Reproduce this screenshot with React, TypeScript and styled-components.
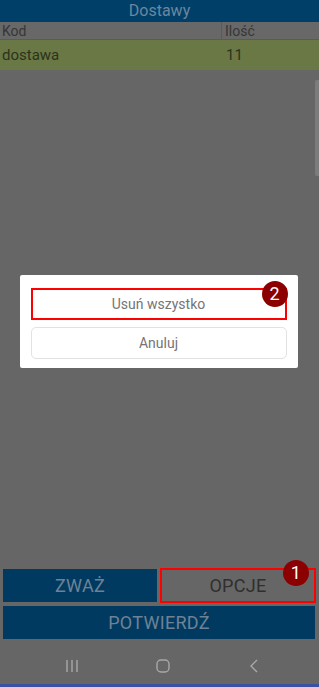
import React from 'react';
import styled, { createGlobalStyle } from 'styled-components';

const GlobalStyle = createGlobalStyle`
  html, body {
    margin: 0;
    padding: 0;
    background: #666666;
  }
  * {
    box-sizing: border-box;
  }
  body {
    font-family: Roboto, "Noto Sans", "Liberation Sans", sans-serif;
  }
`;

const Screen = styled.div`
  position: relative;
  width: 319px;
  height: 687px;
  display: flex;
  flex-direction: column;
  background: #666666;
  overflow: hidden;
`;

const Header = styled.div`
  height: 22px;
  background: #003f68;
  color: #6a879f;
  font-size: 16px;
  line-height: 22px;
  text-align: center;
`;

const Row = styled.div<{ $kind: 'head' | 'data' }>`
  display: grid;
  grid-template-columns: 222px 94px 3px;
  height: ${(p) => (p.$kind === 'head' ? '18px' : '30px')};
  background: ${(p) => (p.$kind === 'head' ? '#686868' : '#697844')};
  border-bottom: 1px solid ${(p) => (p.$kind === 'head' ? '#5a5a5a' : '#697844')};
  color: ${(p) => (p.$kind === 'head' ? '#363636' : '#2c331c')};
  font-size: ${(p) => (p.$kind === 'head' ? '14px' : '15px')};
`;

const Cell = styled.div<{ $divider?: boolean; $pad: number }>`
  display: flex;
  align-items: center;
  padding-left: ${(p) => p.$pad}px;
  border-right: ${(p) => (p.$divider ? '1px solid #5a5a5a' : 'none')};
  white-space: nowrap;
`;

const Body = styled.div`
  position: relative;
  flex: 1;
`;

const ScrollThumb = styled.div`
  position: absolute;
  top: 10px;
  right: 0;
  width: 4px;
  height: 96px;
  border-radius: 2px 0 0 2px;
  background: #7c7c7c;
`;

const Actions = styled.div`
  display: flex;
  flex-direction: column;
  gap: 4px;
  padding: 0 4px 0 3px;
`;

const ActionRow = styled.div`
  display: grid;
  grid-template-columns: 1fr 1fr;
  gap: 4px;
`;

const ActionButton = styled.div<{ $flat?: boolean; $marked?: boolean }>`
  position: relative;
  height: 33px;
  display: flex;
  align-items: center;
  justify-content: center;
  background: ${(p) => (p.$flat ? '#666666' : '#013a60')};
  color: ${(p) => (p.$flat ? '#2f2f2f' : '#6d8296')};
  font-size: 18px;
  letter-spacing: 0.3px;
  outline: ${(p) => (p.$marked ? '2px solid #ff0000' : 'none')};
  outline-offset: -1px;
`;

const Badge = styled.div<{ $top: number; $right: number }>`
  position: absolute;
  top: ${(p) => p.$top}px;
  right: ${(p) => p.$right}px;
  width: 26px;
  height: 26px;
  border-radius: 50%;
  background: #8b0000;
  color: #ffffff;
  font-size: 18px;
  line-height: 26px;
  text-align: center;
  z-index: 3;
`;

const NavBar = styled.div`
  height: 44px;
  margin-top: 4px;
  display: grid;
  grid-template-columns: 1fr 1fr 1fr;
  align-items: center;
  justify-items: center;
  padding: 5px 20px 0 26px;
  border-bottom: 3px solid #3b4fa3;
`;

const Backdrop = styled.div`
  position: absolute;
  inset: 0;
  display: flex;
  align-items: flex-start;
  justify-content: center;
  padding-top: 275px;
  z-index: 2;
`;

const Dialog = styled.div`
  width: 278px;
  margin-left: -2px;
  background: #ffffff;
  border-radius: 2px;
  padding: 13px 11px 9px 11px;
  display: flex;
  flex-direction: column;
  gap: 7px;
`;

const DialogButton = styled.div<{ $marked?: boolean }>`
  position: relative;
  height: 32px;
  display: flex;
  align-items: center;
  justify-content: center;
  border: ${(p) => (p.$marked ? '2px solid #ff0000' : '1px solid #e2e2e2')};
  border-radius: ${(p) => (p.$marked ? '0' : '5px')};
  color: #757575;
  font-size: 14px;
`;

const NavIcon = styled.svg`
  display: block;
`;

export default function App() {
  return (
    <>
      <GlobalStyle />
      <Screen>
        <Header>Dostawy</Header>
        <Row $kind="head">
          <Cell $divider $pad={2}>Kod</Cell>
          <Cell $pad={3}>Ilość</Cell>
          <Cell $pad={0} />
        </Row>
        <Row $kind="data">
          <Cell $pad={2}>dostawa</Cell>
          <Cell $pad={4}>11</Cell>
          <Cell $pad={0} />
        </Row>
        <Body>
          <ScrollThumb />
        </Body>
        <Actions>
          <ActionRow>
            <ActionButton>ZWAŻ</ActionButton>
            <ActionButton $flat $marked>
              OPCJE
              <Badge $top={-9} $right={6}>1</Badge>
            </ActionButton>
          </ActionRow>
          <ActionButton>POTWIERDŹ</ActionButton>
        </Actions>
        <NavBar>
          <NavIcon width="14" height="14" viewBox="0 0 14 14">
            <path d="M2 1v12M7 1v12M12 1v12" stroke="#a8a8a8" strokeWidth="1.4" fill="none" />
          </NavIcon>
          <NavIcon width="14" height="14" viewBox="0 0 14 14">
            <rect x="1" y="1" width="12" height="12" rx="4" stroke="#a8a8a8" strokeWidth="1.4" fill="none" />
          </NavIcon>
          <NavIcon width="10" height="14" viewBox="0 0 10 14">
            <path d="M8 1L2 7l6 6" stroke="#a8a8a8" strokeWidth="1.4" fill="none" />
          </NavIcon>
        </NavBar>
        <Backdrop>
          <Dialog>
            <DialogButton $marked>
              Usuń wszystko
              <Badge $top={-9} $right={-3}>2</Badge>
            </DialogButton>
            <DialogButton>Anuluj</DialogButton>
          </Dialog>
        </Backdrop>
      </Screen>
    </>
  );
}
